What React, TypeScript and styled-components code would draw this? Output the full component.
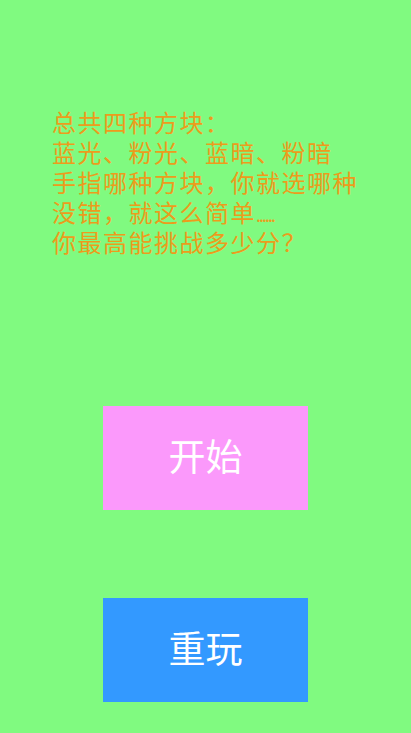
import styled, { createGlobalStyle } from "styled-components";

const GlobalStyle = createGlobalStyle`
  html, body {
    margin: 0;
    padding: 0;
    background: #80fa80;
  }
  body {
    font-family: "Noto Sans CJK SC", "Noto Sans", sans-serif;
  }
`;

const Page = styled.div`
  min-height: 733px;
  background: #80fa80;
  display: flex;
  flex-direction: column;
  padding-top: 107px;
  box-sizing: border-box;
`;

const Intro = styled.div`
  padding-left: 52px;
  color: #ec9c1c;
  font-size: 24px;
  letter-spacing: 1.5px;
  line-height: 30px;
`;

const Line = styled.div`
  white-space: nowrap;
  height: 30px;
`;

const Dots = styled.span`
  letter-spacing: -2px;
  font-size: 18px;
  line-height: 0;
`;

const Buttons = styled.div`
  display: flex;
  flex-direction: column;
  align-items: center;
  gap: 88px;
  margin-top: 149px;
`;

const Button = styled.button<{ $bg: string }>`
  width: 205px;
  height: 104px;
  border: none;
  background: ${(p) => p.$bg};
  color: #ffffff;
  font-family: "Noto Sans CJK SC", sans-serif;
  font-size: 37px;
  display: flex;
  align-items: center;
  justify-content: center;
  padding: 0 0 6px;
  cursor: pointer;
`;

export default function App() {
  return (
    <>
      <GlobalStyle />
      <Page>
        <Intro>
          <Line>总共四种方块：</Line>
          <Line>蓝光、粉光、蓝暗、粉暗</Line>
          <Line>手指哪种方块，你就选哪种</Line>
          <Line>
            没错，就这么简单<Dots>......</Dots>
          </Line>
          <Line>你最高能挑战多少分？</Line>
        </Intro>
        <Buttons>
          <Button $bg="#fb99fb">开始</Button>
          <Button $bg="#3399ff">重玩</Button>
        </Buttons>
      </Page>
    </>
  );
}
